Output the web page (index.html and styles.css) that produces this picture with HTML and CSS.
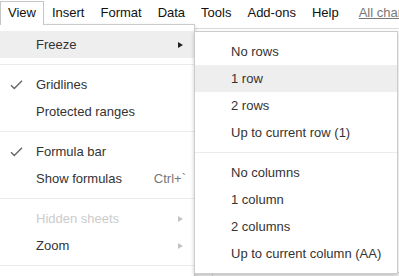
FILE: index.html
```html
<!DOCTYPE html>
<html lang="en">

<head>
    <meta charset="UTF-8">
    <meta name="viewport" content="width=device-width, initial-scale=1.0">
    <title>View menu</title>
    <link rel="stylesheet" href="styles.css">
</head>

<body>
    <div class="app">
        <div class="menubar">
            <span class="mb-item open">View</span>
            <span class="mb-item">Insert</span>
            <span class="mb-item">Format</span>
            <span class="mb-item">Data</span>
            <span class="mb-item">Tools</span>
            <span class="mb-item">Add-ons</span>
            <span class="mb-item">Help</span>
            <span class="mb-link">All changes saved in Drive</span>
        </div>

        <div class="sheet">
            <div class="toolbar"></div>
            <div class="col-head"></div>
        </div>

        <!-- View dropdown -->
        <div class="menu view-menu">
            <div class="item hover">
                <span class="label">Freeze</span>
                <span class="arrow dark"></span>
            </div>
            <div class="sep"></div>
            <div class="item">
                <svg class="check" width="13" height="10" viewBox="0 0 13 10">
                    <path d="M1 5.2 L4.3 8.5 L12 0.8" fill="none" stroke="#666" stroke-width="1.4" />
                </svg>
                <span class="label">Gridlines</span>
            </div>
            <div class="item">
                <span class="label">Protected ranges</span>
            </div>
            <div class="sep"></div>
            <div class="item">
                <svg class="check" width="13" height="10" viewBox="0 0 13 10">
                    <path d="M1 5.2 L4.3 8.5 L12 0.8" fill="none" stroke="#666" stroke-width="1.4" />
                </svg>
                <span class="label">Formula bar</span>
            </div>
            <div class="item">
                <span class="label">Show formulas</span>
                <span class="shortcut">Ctrl+`</span>
            </div>
            <div class="sep"></div>
            <div class="item disabled">
                <span class="label">Hidden sheets</span>
                <span class="arrow"></span>
            </div>
            <div class="item">
                <span class="label">Zoom</span>
                <span class="arrow"></span>
            </div>
            <div class="sep"></div>
        </div>

        <!-- Freeze submenu -->
        <div class="menu sub-menu">
            <div class="item"><span class="label">No rows</span></div>
            <div class="item hover"><span class="label">1 row</span></div>
            <div class="item"><span class="label">2 rows</span></div>
            <div class="item"><span class="label">Up to current row (1)</span></div>
            <div class="sep"></div>
            <div class="item"><span class="label">No columns</span></div>
            <div class="item"><span class="label">1 column</span></div>
            <div class="item"><span class="label">2 columns</span></div>
            <div class="item"><span class="label">Up to current column (AA)</span></div>
        </div>
    </div>
</body>

</html>
```

FILE: styles.css
```css
* {
    box-sizing: border-box;
}

body {
    margin: 0;
    background-color: #fff;
    font-family: "Liberation Sans", Arial, sans-serif;
    font-size: 13px;
    color: #333;
    overflow: hidden;
}

.app {
    position: relative;
    width: 399px;
    height: 276px;
    overflow: hidden;
}

/* menu bar */

.menubar {
    display: flex;
    align-items: flex-start;
    height: 24px;
    white-space: nowrap;
}

.mb-item {
    margin-top: 1px;
    padding: 0 7px 2px;
    line-height: 21px;
    border: 1px solid transparent;
    border-bottom: 0;
    color: #111;
}

.mb-item.open {
    position: relative;
    z-index: 3;
    background-color: #fff;
    border-color: #c6c6c6;
}

.mb-link {
    margin-top: 2px;
    margin-left: 12px;
    line-height: 21px;
    color: #777;
    text-decoration: underline;
}

/* sheet behind the menus */

.sheet {
    height: 252px;
    display: flex;
    flex-direction: column;
}

.toolbar {
    height: 5px;
    border-bottom: 1px solid #dadada;
}

.col-head {
    margin-top: auto;
    height: 4px;
    background-color: #f3f3f3;
    border-top: 1px solid #d4d4d4;
    background-image: linear-gradient(90deg, transparent 0, transparent 212px, #d4d4d4 212px, #d4d4d4 213px, transparent 213px);
}

/* menus */

.menu {
    position: absolute;
    z-index: 2;
    background-color: #fff;
    border: 1px solid rgba(0, 0, 0, .2);
    box-shadow: 0 2px 4px rgba(0, 0, 0, .2);
    padding: 6px 0;
}

.view-menu {
    top: 24px;
    left: -1px;
    width: 196px;
}

.sub-menu {
    top: 31px;
    left: 194px;
    width: 204px;
    z-index: 4;
}

.item {
    position: relative;
    display: flex;
    align-items: center;
    height: 27px;
    padding: 0 8px 0 36px;
    white-space: nowrap;
}

.item.hover {
    background-color: #eee;
}

.item.disabled {
    color: #ccc;
}

.shortcut {
    margin-left: auto;
    color: #777;
}

.arrow {
    margin-left: auto;
    margin-right: 3px;
    width: 0;
    height: 0;
    border-top: 3.5px solid transparent;
    border-bottom: 3.5px solid transparent;
    border-left: 5px solid #c4c4c4;
}

.arrow.dark {
    border-left-color: #222;
}

.check {
    position: absolute;
    left: 10px;
    top: 9px;
}

.sep {
    height: 1px;
    margin: 6px 0;
    background-color: #ebebeb;
}
```
